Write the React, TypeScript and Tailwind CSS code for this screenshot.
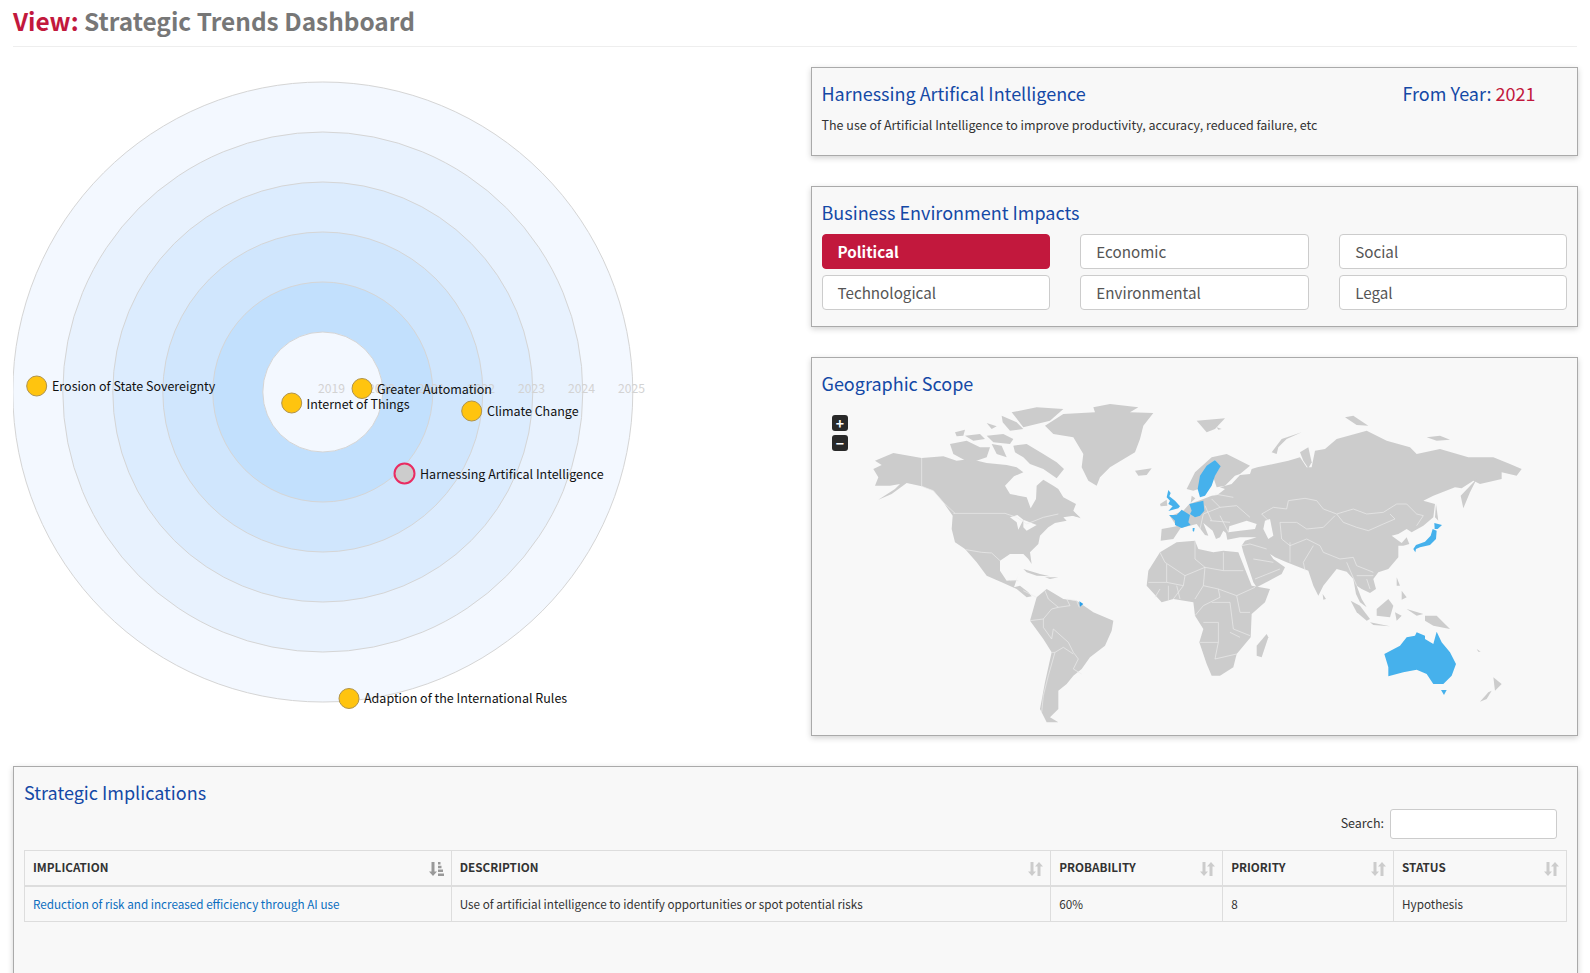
const font = '"Noto Sans CJK SC", "Noto Sans", sans-serif';

type Trend = { name: string; cx: number; cy: number; lx: number; ly: number; active?: boolean };

const trends: Trend[] = [
  { name: 'Erosion of State Sovereignty', cx: 36.7, cy: 386, lx: 52, ly: 391 },
  { name: 'Internet of Things', cx: 291.7, cy: 403, lx: 306.5, ly: 409 },
  { name: 'Greater Automation', cx: 362, cy: 388.5, lx: 377, ly: 394 },
  { name: 'Climate Change', cx: 471.7, cy: 411, lx: 487, ly: 416 },
  { name: 'Harnessing Artifical Intelligence', cx: 404.5, cy: 473.5, lx: 420, ly: 479, active: true },
  { name: 'Adaption of the International Rules', cx: 349, cy: 698.5, lx: 364, ly: 703 },
];

const rings = [
  { r: 310, fill: '#f3f8ff' },
  { r: 260, fill: '#e8f2fe' },
  { r: 210, fill: '#dcecfe' },
  { r: 160, fill: '#d0e6fd' },
  { r: 110, fill: '#c2e0fd' },
  { r: 60, fill: '#f3f8ff' },
];

const years = ['2019', '2020', '2021', '2022', '2023', '2024', '2025'];

function Radar() {
  return (
    <svg width="650" height="660" viewBox="13 60 650 660" className="block shrink-0" style={{ fontFamily: font }}>
      {rings.map((ring) => (
        <circle key={ring.r} cx="322.8" cy="392" r={ring.r} fill={ring.fill} stroke="#d5d5d5" strokeWidth="1" />
      ))}
      {years.map((year, i) => (
        <text key={year} x={318 + i * 50} y="392.5" fontSize="12.2" fill="#d3d3d3">{year}</text>
      ))}
      {trends.map((t) => (
        <g key={t.name}>
          <circle
            cx={t.cx}
            cy={t.cy}
            r="10"
            fill={t.active ? '#cccccc' : '#ffc40f'}
            stroke={t.active ? '#e92c62' : '#b0934a'}
            strokeWidth={t.active ? 2 : 1}
          />
          <text x={t.lx} y={t.ly} fontSize="12.5" fill="#111">{t.name}</text>
        </g>
      ))}
    </svg>
  );
}

// coordinates below are traced in 3x crop space, hence the scale
function WorldMap() {
  return (
    <svg width="765" height="342" viewBox="812 393 765 342" className="block">
      <g transform="translate(810 390) scale(0.33333)" fill="#cccccc">
        <path d="M195 215L250 192L335 207L400 202L440 215L480 210L530 222L590 228L620 235L640 250L612 262L585 290L600 315L650 325L662 358L678 330L680 290L700 272L730 290L745 300L760 325L798 345L790 365L812 388L790 380L760 385L770 395L735 402L715 415L690 440L685 465L660 490L665 525L655 510L640 495L600 495L570 515L570 545L590 575L620 572L628 548L612 595L630 590L655 610L665 622L650 625L620 600L580 582L530 560L500 520L465 480L435 460L425 420L428 380L400 340L370 305L335 292L290 282L245 315L205 332L255 300L270 285L240 290L195 290L205 265L190 240L215 228Z" />
        <path d="M705 110L760 75L855 70L850 55L900 45L985 55L960 70L1030 72L1000 110L990 150L975 190L900 235L870 265L860 290L835 275L815 235L820 195L790 145L730 135Z" />
        <path d="M975 245L1025 238L1010 258L985 260Z" />
        <path d="M605 70L680 55L760 60L720 95L640 115L625 95Z" />
        <path d="M610 170L650 165L700 195L740 220L762 240L740 268L700 240L660 225L640 205L615 190Z" />
        <path d="M420 165L470 155L510 175L540 175L530 205L480 222L430 195Z" />
        <path d="M530 140L580 135L610 150L600 165L550 160Z" />
        <path d="M435 130L465 122L460 140L440 142Z" />
        <path d="M465 140L510 135L525 150L490 155Z" />
        <path d="M575 80L620 100L640 120L600 125L578 100Z" />
        <path d="M545 165L575 170L590 205L560 195Z" />
        <path d="M530 102L560 112L545 120Z" />
        <path d="M790 370L810 385L785 380Z" />
        <path d="M640 540L690 555L720 562L680 560L650 550Z" />
        <path d="M705 565L745 565L720 570Z" />
        <path d="M680 625L710 600L760 630L800 635L850 670L910 695L905 725L885 770L840 805L815 840L790 860L770 885L745 905L745 960L720 985L745 1000L710 1000L690 960L705 880L725 790L700 750L660 695Z" />
        <path d="M1050 345L1070 332L1072 350L1052 352Z" />
        <path d="M600 385L622 378L640 392L625 422L620 400Z M640 392L680 408L650 425L640 415Z" fill="#f8f8f8" />
      </g>
      <g transform="translate(810 390) scale(0.33333)" fill="none" stroke="#ededed" strokeWidth="2">
        <path d="M335 207L335 292M335 292L370 305L400 340L435 373M430 373L585 373L620 385L650 405L700 385L745 375" />
        <path d="M468 482L515 490L545 492L570 515M600 575L625 575M640 605L680 625" />
        <path d="M705 605L715 630L745 655L780 650L770 630L800 635M800 635L808 655M808 640L820 650M745 655L725 660L700 690L660 695M700 690L700 715L725 750" />
        <path d="M725 750L730 720L775 760L790 790L805 810L790 840M790 795L760 775L735 790L715 860L700 920L695 970M735 790L725 790M790 840L815 855" />
      </g>
      <g transform="translate(1140 390) scale(0.33333)" fill="#cccccc">
        <path d="M20 590L25 545L60 490L110 460L165 455L175 480L220 490L250 485L295 490L335 590L390 600L375 640L335 675L332 745L290 795L280 835L240 860L215 860L200 825L178 760L190 720L165 680L160 640L100 630L65 640Z" />
        <path d="M62 455L65 420L110 412L90 382L130 365L148 345L190 330L215 320L232 318L255 300L240 295L275 285L300 258L330 255L335 240L352 235L400 225L445 215L480 205L500 235L515 235L525 185L555 180L590 150L680 125L740 155L810 175L830 195L900 180L985 205L1060 205L1110 225L1145 240L1130 260L1085 250L1085 270L1020 285L1000 275L965 298L945 295L880 320L850 335L885 345L880 385L850 410L815 430L800 420L775 435L755 440L785 462L800 445L808 465L790 470L775 470L775 505L745 540L715 550L700 570L708 600L690 612L665 600L650 590L665 630L680 655L660 640L648 615L640 570L620 548L590 540L550 590L535 620L520 590L505 545L440 520L405 505L390 495L400 510L435 535L425 555L350 595L340 580L320 520L310 490L305 470L315 455L350 445L300 445L262 452L258 432L250 425L240 445L228 450L218 425L190 402L205 440L195 438L170 405L150 410L122 417L100 450Z" />
        <path d="M300 255L330 230L290 210L260 195L215 205L165 250L140 300L160 305L175 300L195 240L225 212L240 235L220 265L230 295L255 290L285 260Z" />
        <path d="M375 395L390 390L400 440L385 450L370 420Z" fill="#f8f8f8" />
        <path d="M268 412L320 395L350 405L345 420L300 425L265 430Z" fill="#f8f8f8" />
        <path d="M155 320L166 328L152 342Z" />
        <path d="M170 95L255 88L225 120L200 130Z" />
        <path d="M230 115L245 120L235 122Z" />
        <path d="M615 85L640 80L685 110L650 108Z" />
        <path d="M395 190L425 150L485 130L440 150L415 175L410 195Z" />
        <path d="M480 190L505 175L515 220L505 238L490 215Z" />
        <path d="M860 145L900 140L930 152L890 155Z" />
        <path d="M962 320L1010 270L990 310L970 358Z" />
        <path d="M888 345L895 395L885 385Z" />
        <path d="M380 735L385 745L365 805L350 800L350 770Z" />
        <path d="M548 615L558 630L550 632Z" />
        <path d="M632 635L660 650L690 690L680 695L650 670Z" />
        <path d="M690 700L750 712L700 708Z" />
        <path d="M710 660L745 630L760 650L750 685L710 680Z" />
        <path d="M765 670L785 680L770 695Z" />
        <path d="M855 680L890 680L930 720L880 710L855 695Z" />
        <path d="M770 565L780 590L770 590Z" />
        <path d="M785 605L800 625L785 632Z" />
        <path d="M1060 865L1085 885L1065 905Z" />
        <path d="M1055 905L1040 930L1020 938L1045 910Z" />
        <path d="M1010 780L1022 788L1015 788Z" />
        <path d="M800 660L850 675L830 680Z" />
      </g>
      <g transform="translate(1140 390) scale(0.33333)" fill="none" stroke="#ededed" strokeWidth="2">
        <path d="M365 375L400 355L440 360L445 335L495 328L530 335L550 360L590 375L640 360L680 375L730 370L770 345L800 345L830 375L850 380L830 410" />
        <path d="M590 375L610 400L650 415L685 425L730 405L765 390L750 375" />
        <path d="M365 375L385 395M420 400L470 400L500 420L550 415L585 380M500 450L540 470L550 490L600 510L640 505L650 530L700 550M450 460L450 520M520 470L490 520L495 545M420 400L425 450L450 470L500 450" />
        <path d="M215 330L240 355L290 350L330 385M240 355L190 375L180 420M225 315L280 325M210 395L270 400M195 350L215 395M240 380L265 430" />
        <path d="M305 470L330 465L380 480M340 510L400 520M345 570L420 540" />
        <path d="M620 520L650 590M650 560L700 560M680 570L690 600" />
        <path d="M60 490L75 520L135 560L195 535L250 545L310 545M165 455L165 510L195 535M250 490L250 545M195 535L190 590L165 630M135 560L130 590L80 580L25 580M80 525L80 580M130 590L100 630M190 590L235 600L290 620L345 595M235 600L240 625L190 650L165 680M290 620L300 670L330 670M215 640L270 640L280 720L330 740M190 700L235 700L235 760L180 760M235 760L225 810L290 795M270 730L300 745M60 600L45 625M85 590L85 635M110 590L120 630" />
      </g>
      <g transform="translate(1140 390) scale(0.33333)" fill="#46b1ec">
        <path d="M225 213L242 232L225 260L215 290L195 320L180 325L173 300L180 260L200 230Z" />
        <path d="M85 303L92 312L88 322L105 335L120 352L115 358L85 366L98 352L85 345L90 335L80 325Z" />
        <path d="M148 345L190 335L193 365L180 380L165 385L150 375L155 365Z" />
        <path d="M87 378L110 378L125 362L150 378L145 400L152 408L125 417L105 408L105 395Z" />
        <path d="M158 417L164 417L162 428L158 426Z" />
        <path d="M820 480L828 468L855 458L872 440L878 420L890 425L888 450L870 468L840 475L828 480L826 490Z" />
        <path d="M883 402L906 408L893 420L884 420Z" />
        <path d="M733 795L780 770L800 745L825 740L830 730L855 740L855 750L880 765L890 728L905 760L930 790L948 825L935 860L910 885L880 885L860 855L830 842L790 850L745 862L745 835Z" />
        <path d="M903 903L920 903L912 918Z" />
      </g>
      <path transform="translate(810 390) scale(0.33333)" d="M808 637L820 645L810 653Z" fill="#2a9fe8" />
    </svg>
  );
}

function SortIcon({ active }: { active?: boolean }) {
  return (
    <svg width="15" height="14" viewBox="0 0 15 14" className="absolute right-[7px] top-[11px]">
      {active ? (
        <g fill="#999">
          <path d="M2.5 0h3v9.5H8L4 14 0 9.5h2.5z" />
          <path d="M9 0h2.5v2.5H9zM9 3.8h3.5v2.5H9zM9 7.5h5v2.5H9zM9 11.5h6V14H9z" />
        </g>
      ) : (
        <g fill="#ccc">
          <path d="M2.5 0h3v9.5H8L4 14 0 9.5h2.5z" />
          <path d="M11 0l4 4.5h-2.5V14h-3V4.5H7z" />
        </g>
      )}
    </svg>
  );
}

const panel = 'border border-[#aaaaaa] bg-[#f8f8f8] shadow-[0_2px_6px_rgba(0,0,0,0.18)]';
const heading = 'text-[18px] leading-[26px] text-[#1449a6]';

const impacts = ['Political', 'Economic', 'Social', 'Technological', 'Environmental', 'Legal'];

const columns = [
  { label: 'Implication', width: 'w-[426px]', active: true },
  { label: 'Description', width: 'w-[600px]' },
  { label: 'Probability', width: 'w-[172px]' },
  { label: 'Priority', width: 'w-[171px]' },
  { label: 'Status', width: 'w-[173px]' },
];

export default function App() {
  return (
    <div className="h-[973px] overflow-hidden bg-white px-[13px]" style={{ fontFamily: font }}>
      <div className="h-[47px] border-b border-[#eeeeee]">
        <h2 className="pt-[2px] text-[24.4px] leading-[38px] font-bold text-[#777777]">
          <span className="text-[#c2183d]">View:</span> Strategic Trends Dashboard
        </h2>
      </div>

      <div className="flex gap-[148px] pt-[13px]">
        <div className="w-[650px] shrink-0">
          <Radar />
        </div>

        <div className="flex w-[767px] flex-col gap-[30px] pt-[7px]">
          <div className={`${panel} h-[89px] px-[9.5px] pt-[12px]`}>
            <div className="flex justify-between pr-[32px]">
              <h3 className={heading}>Harnessing Artifical Intelligence</h3>
              <div className={heading}>
                From Year: <span className="text-[#c2183d]">2021</span>
              </div>
            </div>
            <p className="mt-[9px] text-[12.5px] leading-[20px] text-[#333333]">
              The use of Artificial Intelligence to improve productivity, accuracy, reduced failure, etc
            </p>
          </div>

          <div className={`${panel} h-[141px] px-[9.5px] pt-[12px]`}>
            <h3 className={heading}>Business Environment Impacts</h3>
            <div className="mt-[9px] grid grid-cols-3 gap-x-[30.5px] gap-y-[6px]">
              {impacts.map((name, i) => (
                <button
                  key={name}
                  className={`h-[35px] rounded-[4px] border px-[15px] text-left text-[15.2px] leading-[33px] ${
                    i === 0
                      ? 'border-[#c2183d] bg-[#c2183d] font-bold text-white'
                      : 'border-[#cccccc] bg-white text-[#555555]'
                  }`}
                >
                  {name}
                </button>
              ))}
            </div>
          </div>

          <div className={`${panel} relative h-[379px] overflow-hidden`}>
            <h3 className={`${heading} px-[9.5px] pt-[12px]`}>Geographic Scope</h3>
            <div className="mt-[-4px]">
              <WorldMap />
            </div>
            <div className="absolute top-[57px] left-[20px] flex flex-col gap-[4px]">
              <div className="flex h-[16px] w-[16px] items-center justify-center rounded-[3px] bg-[#292929] text-[14px] leading-none font-bold text-white">+</div>
              <div className="flex h-[16px] w-[16px] items-center justify-center rounded-[3px] bg-[#292929] text-[14px] leading-none font-bold text-white">−</div>
            </div>
          </div>
        </div>
      </div>

      <div className={`${panel} mt-[30px] h-[300px] w-[1565px] px-[10px] pt-[12px]`}>
        <h3 className={heading}>Strategic Implications</h3>
        <div className="mt-[4px] flex items-center justify-end gap-[6px] pr-[10px]">
          <span className="pb-[2px] text-[12.5px] text-[#333333]">Search:</span>
          <input className="h-[30px] w-[167px] rounded-[3px] border border-[#cccccc] bg-white" />
        </div>
        <div className="mt-[11px] w-[1543px] border border-[#dddddd]">
          <div className="flex h-[36px] border-b-2 border-[#dddddd]">
            {columns.map((col, i) => (
              <div
                key={col.label}
                className={`relative ${col.width} px-[8px] text-[11.7px] leading-[32px] font-bold text-[#333333] uppercase ${i > 0 ? 'border-l border-[#dddddd]' : ''}`}
              >
                {col.label}
                <SortIcon active={col.active} />
              </div>
            ))}
          </div>
          <div className="flex h-[34px] text-[11.7px] leading-[33px] text-[#333333]">
            <div className="w-[426px] px-[8px] text-[#0b6ebf]">Reduction of risk and increased efficiency through AI use</div>
            <div className="w-[600px] border-l border-[#dddddd] px-[8px]">Use of artificial intelligence to identify opportunities or spot potential risks</div>
            <div className="w-[172px] border-l border-[#dddddd] px-[8px]">60%</div>
            <div className="w-[171px] border-l border-[#dddddd] px-[8px]">8</div>
            <div className="w-[173px] border-l border-[#dddddd] px-[8px]">Hypothesis</div>
          </div>
        </div>
      </div>
    </div>
  );
}
